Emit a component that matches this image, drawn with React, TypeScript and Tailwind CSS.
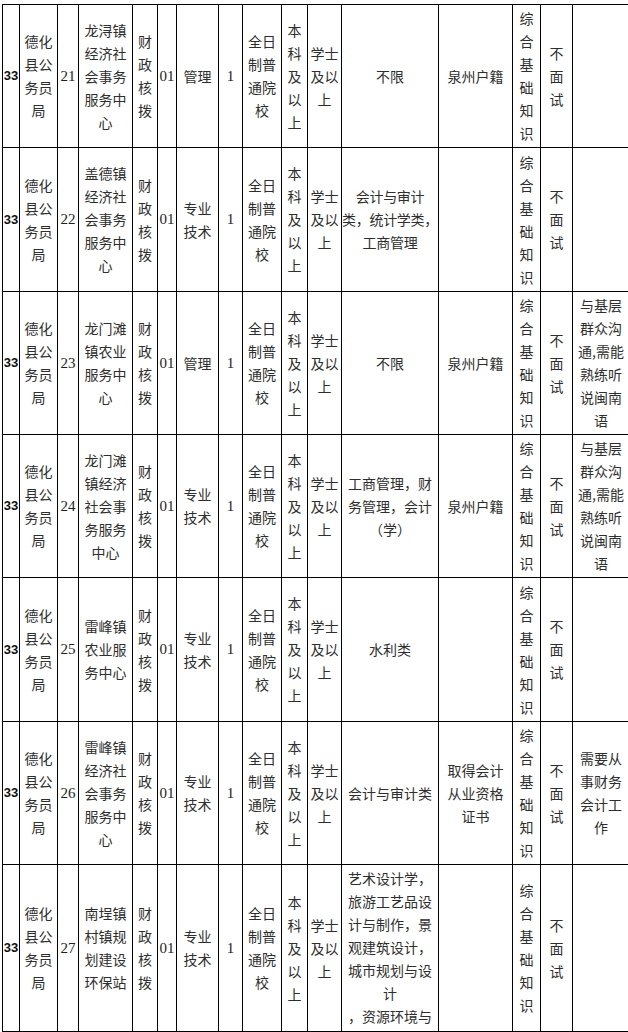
const ROWS = [
  {
    no: "21",
    unit: ["龙浔镇", "经济社", "会事务", "服务中", "心"],
    post: ["管理"],
    major: ["不限"],
    hukou: ["泉州户籍"],
    note: [] as string[],
  },
  {
    no: "22",
    unit: ["盖德镇", "经济社", "会事务", "服务中", "心"],
    post: ["专业", "技术"],
    major: ["会计与审计", "类，统计学类，", "工商管理"],
    hukou: [],
    note: [],
  },
  {
    no: "23",
    unit: ["龙门滩", "镇农业", "服务中", "心"],
    post: ["管理"],
    major: ["不限"],
    hukou: ["泉州户籍"],
    note: ["与基层", "群众沟", "通,需能", "熟练听", "说闽南", "语"],
  },
  {
    no: "24",
    unit: ["龙门滩", "镇经济", "社会事", "务服务", "中心"],
    post: ["专业", "技术"],
    major: ["工商管理，财", "务管理，会计", "（学）"],
    hukou: ["泉州户籍"],
    note: ["与基层", "群众沟", "通,需能", "熟练听", "说闽南", "语"],
  },
  {
    no: "25",
    unit: ["雷峰镇", "农业服", "务中心"],
    post: ["专业", "技术"],
    major: ["水利类"],
    hukou: [],
    note: [],
  },
  {
    no: "26",
    unit: ["雷峰镇", "经济社", "会事务", "服务中", "心"],
    post: ["专业", "技术"],
    major: ["会计与审计类"],
    hukou: ["取得会计", "从业资格", "证书"],
    note: ["需要从", "事财务", "会计工", "作"],
  },
  {
    no: "27",
    unit: ["南埕镇", "村镇规", "划建设", "环保站"],
    post: ["专业", "技术"],
    major: ["艺术设计学，", "旅游工艺品设", "计与制作，景", "观建筑设计，", "城市规划与设", "计", "，资源环境与"],
    hukou: [],
    note: [],
  },
];

const cjk = "font-['Noto_Sans_CJK_SC',sans-serif] text-[14px] leading-[23px] text-[#2e2e2e]";
const num = "font-['Liberation_Serif',serif] text-[15px] text-[#1e1e1e]";

function Cell({
  lines,
  className = "",
  top = false,
}: {
  lines: string[];
  className?: string;
  top?: boolean;
}) {
  return (
    <div
      className={`flex flex-col items-center overflow-hidden border-r border-b border-black text-center ${
        top ? "justify-start pt-[2px]" : "justify-center"
      } ${className}`}
    >
      {lines.map((l, i) => (
        <span key={i} className="whitespace-nowrap">
          {l}
        </span>
      ))}
    </div>
  );
}

export default function App() {
  return (
    <div className="h-[1032px] w-[628px] overflow-hidden bg-white">
      <div className="ml-[2px] mt-[4px] grid w-[626px] grid-cols-[17px_38px_21px_54px_25px_19px_42px_24px_39px_26px_34px_97px_74px_28px_32px_56px] grid-rows-[143px_144px_143px_143px_144px_143px_167px] border-l border-t border-black">
        {ROWS.map((r, i) => {
          const last = i === ROWS.length - 1;
          return (
            <div key={r.no} className="contents">
              <div className="flex items-center justify-center border-r border-b border-black font-['Liberation_Sans',sans-serif] text-[13px] font-bold text-[#111]">
                33
              </div>
              <Cell className={cjk} lines={["德化", "县公", "务员", "局"]} />
              <Cell className={num} lines={[r.no]} />
              <Cell className={cjk} lines={r.unit} />
              <Cell className={cjk} lines={["财", "政", "核", "拨"]} />
              <Cell className={num} lines={["01"]} />
              <Cell className={cjk} lines={r.post} />
              <Cell className={num} lines={["1"]} />
              <Cell className={cjk} lines={["全日", "制普", "通院", "校"]} />
              <Cell className={cjk} lines={["本", "科", "及", "以", "上"]} />
              <Cell className={cjk} lines={["学士", "及以", "上"]} />
              <Cell
                className={`${cjk} ${r.major.some((l) => l.length > 6) ? "tracking-[-0.3px]" : ""}`}
                lines={r.major}
                top={last}
              />
              <Cell className={cjk} lines={r.hukou} />
              <Cell className={cjk} lines={["综", "合", "基", "础", "知", "识"]} />
              <Cell className={cjk} lines={["不", "面", "试"]} />
              <Cell className={`${cjk} border-r-0`} lines={r.note} />
            </div>
          );
        })}
      </div>
    </div>
  );
}
